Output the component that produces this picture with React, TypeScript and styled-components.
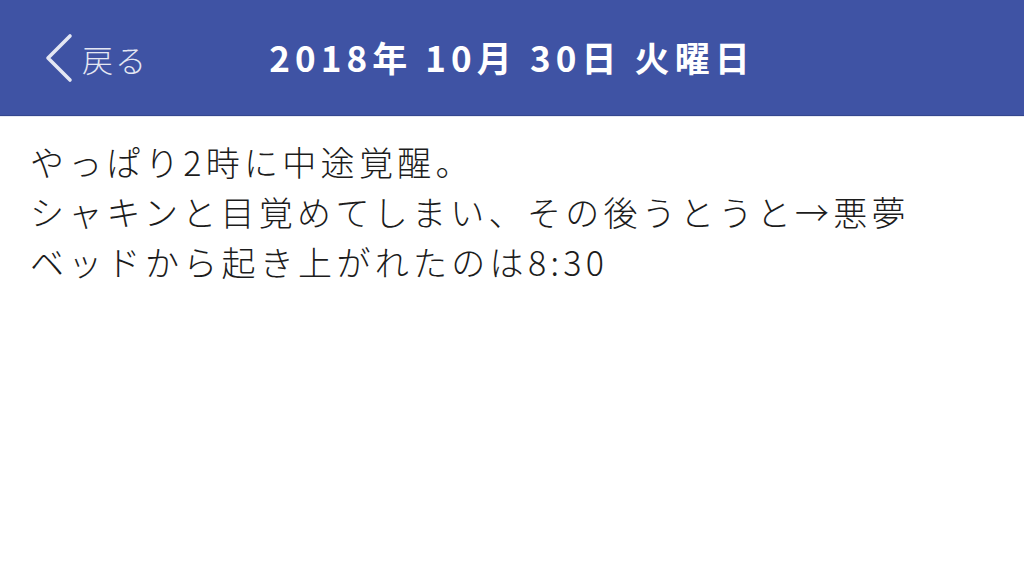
import React from "react";
import styled, { createGlobalStyle } from "styled-components";

const GlobalStyle = createGlobalStyle`
  html, body {
    margin: 0;
    padding: 0;
    background: #ffffff;
  }
  body {
    font-family: "Noto Sans CJK JP", "Noto Sans", sans-serif;
  }
`;

const Page = styled.div`
  width: 1024px;
  height: 577px;
  display: flex;
  flex-direction: column;
  background: #ffffff;
  overflow: hidden;
`;

const NavBar = styled.header`
  height: 115px;
  flex-shrink: 0;
  background: #3f53a4;
  border-bottom: 1px solid #34468e;
  box-shadow: 0 1px 0 #e6e9f2;
  display: grid;
  grid-template-columns: 1fr auto 1fr;
  align-items: center;
`;

const BackButton = styled.button`
  justify-self: start;
  display: flex;
  align-items: center;
  gap: 8px;
  margin-left: 44px;
  padding: 0;
  border: none;
  background: none;
  color: #e4e7f3;
  font-family: "Noto Sans CJK JP", sans-serif;
  font-weight: 300;
  font-size: 31px;
  letter-spacing: 2px;
  cursor: pointer;
`;

const BackLabel = styled.span`
  line-height: 1;
  margin-top: 2px;
`;

const Title = styled.h1`
  margin: 0 0 2px;
  color: #ffffff;
  font-family: "Noto Sans CJK JP", sans-serif;
  font-weight: 700;
  font-size: 35px;
  letter-spacing: 5.1px;
  white-space: nowrap;
`;

const Content = styled.main`
  padding: 21px 30px 0;
`;

const Line = styled.p`
  margin: 0;
  color: #1c1c1c;
  font-family: "Noto Sans CJK JP", sans-serif;
  font-weight: 300;
  font-size: 34px;
  line-height: 50px;
  letter-spacing: 4.3px;
  white-space: nowrap;
`;

const Chevron = () => (
  <svg width="30" height="50" viewBox="0 0 30 50" fill="none">
    <path
      d="M26 3 L4 25 L26 47"
      stroke="#e4e7f3"
      strokeWidth="3.6"
      strokeLinecap="round"
      strokeLinejoin="round"
    />
  </svg>
);

const lines = [
  "やっぱり2時に中途覚醒。",
  "シャキンと目覚めてしまい、その後うとうと→悪夢",
  "ベッドから起き上がれたのは8:30",
];

export default function App() {
  return (
    <>
      <GlobalStyle />
      <Page>
        <NavBar>
          <BackButton type="button">
            <Chevron />
            <BackLabel>戻る</BackLabel>
          </BackButton>
          <Title>2018年 10月 30日 火曜日</Title>
          <div />
        </NavBar>
        <Content>
          {lines.map((t) => (
            <Line key={t}>{t}</Line>
          ))}
        </Content>
      </Page>
    </>
  );
}
